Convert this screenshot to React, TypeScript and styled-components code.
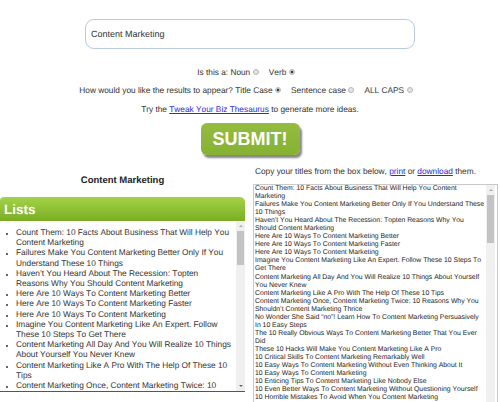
import React from "react";
import styled, { createGlobalStyle } from "styled-components";

const Global = createGlobalStyle`
  html, body { margin: 0; padding: 0; background: #fff; height: 402px; overflow: hidden; }
  body {
    font-family: "Liberation Sans", Arial, sans-serif;
    color: #333;
    text-rendering: geometricPrecision;
    font-kerning: none;
  }
  * { box-sizing: border-box; }
`;

const Page = styled.div`
  width: 500px;
  display: flex;
  flex-direction: column;
  align-items: center;
  & > * { flex-shrink: 0; }
`;

const SearchInput = styled.div`
  margin-top: 19px;
  width: 330px;
  height: 30px;
  border: 1px solid #b9c9de;
  border-radius: 9px;
  display: flex;
  align-items: center;
  padding-left: 5px;
  font-size: 9px;
  color: #333;
`;

const OptionRow = styled.div<{ $mt: number; $shift?: number }>`
  margin-top: ${(p) => p.$mt}px;
  padding-right: ${(p) => p.$shift ?? 0}px;
  display: flex;
  align-items: center;
  font-size: 8.3px;
  line-height: 10px;
  height: 10px;
  color: #333;
  white-space: nowrap;
`;

const Label = styled.span<{ $gap?: number }>`
  margin-left: ${(p) => p.$gap ?? 0}px;
`;

const Radio = styled.span<{ $on?: boolean }>`
  display: inline-block;
  flex: none;
  width: 6px;
  height: 6px;
  border-radius: 50%;
  border: 1px solid #b8b8b8;
  background: ${(p) =>
    p.$on ? "radial-gradient(circle, #3a3a3a 0 1.2px, #e6e6e6 1.7px)" : "#e4e4e4"};
  margin-left: 2.5px;
`;

const Link = styled.a`
  color: #2b2bd2;
  text-decoration: underline;
`;

const Submit = styled.button`
  margin-top: 9px;
  width: 99px;
  height: 32px;
  border: none;
  border-radius: 6px;
  background: linear-gradient(#94bd40, #86b133);
  box-shadow: 2px 3px 2px rgba(55, 55, 55, 0.6);
  color: #fff;
  font-family: "Liberation Sans", Arial, sans-serif;
  font-weight: bold;
  font-size: 18px;
  line-height: 32px;
  padding: 0;
`;

const Columns = styled.div`
  align-self: stretch;
  display: flex;
  gap: 8px;
`;

const LeftCol = styled.div`
  width: 245px;
  display: flex;
  flex-direction: column;
`;

const RightCol = styled.div`
  width: 245px;
  display: flex;
  flex-direction: column;
`;

const Heading = styled.div`
  margin-top: 20px;
  height: 12px;
  line-height: 12px;
  text-align: center;
  font-weight: bold;
  font-size: 9.5px;
  color: #222;
`;

const ListsBar = styled.div`
  margin-top: 10px;
  height: 24px;
  border-radius: 4px 5px 0 0;
  background: linear-gradient(#a4d24a, #8cbf32 55%, #7aad26);
  color: #fff;
  font-weight: bold;
  font-size: 13.5px;
  display: flex;
  align-items: center;
  padding-left: 4px;
`;

const ListBox = styled.div`
  height: 171px;
  display: flex;
  border-bottom: 1px solid #555;
`;

const ListBody = styled.ul`
  flex: 1;
  min-width: 0;
  margin: 0;
  padding: 6px 4.5px 0 16px;
  overflow: hidden;
  font-size: 8.3px;
  line-height: 10.2px;
  color: #333;
  list-style: disc;
  li::marker { font-size: 7px; }
`;

const Scroll = styled.div<{ $w: number; $mr?: number }>`
  flex: none;
  width: ${(p) => p.$w}px;
  margin-right: ${(p) => p.$mr ?? 0}px;
  background: #f0f0f0;
  display: flex;
  flex-direction: column;
  align-items: center;
`;

const Arrow = styled.div<{ $down?: boolean }>`
  flex: none;
  height: 10px;
  width: 100%;
  display: flex;
  align-items: center;
  justify-content: center;
  &::before {
    content: "";
    border-left: 2px solid transparent;
    border-right: 2px solid transparent;
    ${(p) => (p.$down ? "border-top: 2px solid #666;" : "border-bottom: 2px solid #a8a8a8;")}
  }
`;

const Thumb = styled.div<{ $h: number }>`
  flex: none;
  height: ${(p) => p.$h}px;
  width: 7px;
  background: #c3c3c3;
`;

const Spacer = styled.div`
  flex: 1;
`;

const CopyLine = styled.div`
  margin-top: 10px;
  height: 12px;
  line-height: 12px;
  padding-left: 2px;
  font-size: 8.3px;
  color: #333;
  white-space: nowrap;
`;

const TextArea = styled.div`
  margin-top: 7px;
  height: 230px;
  border: 1px solid #c9c9c9;
  display: flex;
`;

const TextBody = styled.div`
  flex: 1;
  min-width: 0;
  overflow: hidden;
  padding: 0 1.2px 0 1px;
  font-size: 6.85px;
  line-height: 8.05px;
  color: #222;
`;

const items = [
  "Count Them: 10 Facts About Business That Will Help You Content Marketing",
  "Failures Make You Content Marketing Better Only If You Understand These 10 Things",
  "Haven\u2019t You Heard About The Recession: Topten Reasons Why You Should Content Marketing",
  "Here Are 10 Ways To Content Marketing Better",
  "Here Are 10 Ways To Content Marketing Faster",
  "Here Are 10 Ways To Content Marketing",
  "Imagine You Content Marketing Like An Expert. Follow These 10 Steps To Get There",
  "Content Marketing All Day And You Will Realize 10 Things About Yourself You Never Knew",
  "Content Marketing Like A Pro With The Help Of These 10 Tips",
  "Content Marketing Once, Content Marketing Twice: 10 Reasons Why You Shouldn\u2019t Content Marketing Thrice",
  "No Wonder She Said \u201cno\u201d! Learn How To Content Marketing Persuasively In 10 Easy Steps",
  "The 10 Really Obvious Ways To Content Marketing Better That You Ever Did",
  "These 10 Hacks Will Make You Content Marketing Like A Pro",
  "10 Critical Skills To Content Marketing Remarkably Well",
  "10 Easy Ways To Content Marketing Without Even Thinking About It",
  "10 Easy Ways To Content Marketing",
  "10 Enticing Tips To Content Marketing Like Nobody Else",
  "10 Even Better Ways To Content Marketing Without Questioning Yourself",
  "10 Horrible Mistakes To Avoid When You Content Marketing",
  "10 Incredibly Useful Content Marketing Tips For Small Businesses",
  "10 Inspirational Quotes About Content Marketing",
];

function Scrollbar({ w, thumb, mr }: { w: number; thumb: number; mr?: number }) {
  return (
    <Scroll $w={w} $mr={mr}>
      <Arrow />
      <Thumb $h={thumb} />
      <Spacer />
      <Arrow $down />
    </Scroll>
  );
}

export default function App() {
  return (
    <Page>
      <Global />
      <SearchInput>Content Marketing</SearchInput>
      <OptionRow $mt={18} $shift={8}>
        <Label>Is this a: Noun</Label>
        <Radio />
        <Label $gap={10}>Verb</Label>
        <Radio $on />
      </OptionRow>
      <OptionRow $mt={8} $shift={8}>
        <Label>How would you like the results to appear? Title Case</Label>
        <Radio $on />
        <Label $gap={10}>Sentence case</Label>
        <Radio />
        <Label $gap={10}>ALL CAPS</Label>
        <Radio />
      </OptionRow>
      <OptionRow $mt={9}>
        <Label>
          Try the <Link href="#">Tweak Your Biz Thesaurus</Link> to generate more ideas.
        </Label>
      </OptionRow>
      <Submit>SUBMIT!</Submit>
      <Columns>
        <LeftCol>
          <Heading>Content Marketing</Heading>
          <ListsBar>Lists</ListsBar>
          <ListBox>
            <ListBody>
              {items.map((t) => (
                <li key={t}>{t}</li>
              ))}
            </ListBody>
            <Scrollbar w={9} thumb={34} />
          </ListBox>
        </LeftCol>
        <RightCol>
          <CopyLine>
            Copy your titles from the box below, <Link href="#">print</Link> or{" "}
            <Link href="#">download</Link> them.
          </CopyLine>
          <TextArea>
            <TextBody>
              {items.map((t) => (
                <div key={t}>{t}</div>
              ))}
            </TextBody>
            <Scrollbar w={9} thumb={48} mr={2} />
          </TextArea>
        </RightCol>
      </Columns>
    </Page>
  );
}
